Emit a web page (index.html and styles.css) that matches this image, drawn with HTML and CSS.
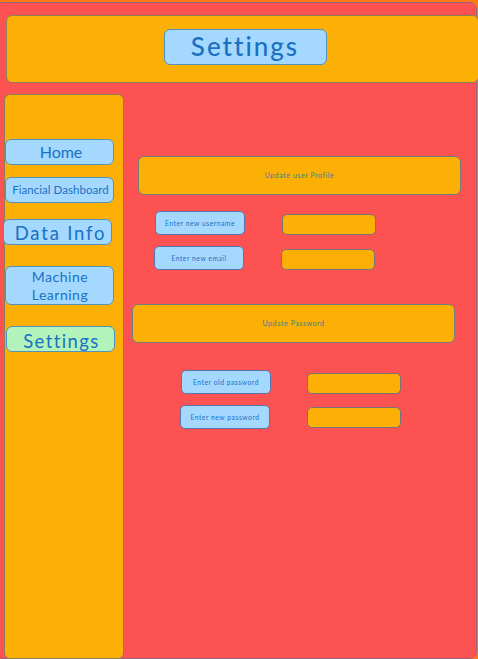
FILE: index.html
```html
<!DOCTYPE html>
<html lang="en">
<head>
<meta charset="utf-8">
<title>Settings</title>
<link rel="stylesheet" href="styles.css">
</head>
<body>
<div class="board">
  <header class="header"><h1 class="title"><span>Settings</span></h1></header>
  <div class="content">
    <nav class="sidebar">
      <a class="nav home"><span>Home</span></a>
      <a class="nav dashboard"><span>Fiancial Dashboard</span></a>
      <a class="nav data"><span>Data Info</span></a>
      <a class="nav learning"><span>Machine<br>Learning</span></a>
      <a class="nav active"><span>Settings</span></a>
    </nav>
    <main class="main">
      <section class="profile">
        <h2 class="panel"><span>Update user Profile</span></h2>
        <div class="row"><label class="label">Enter new username</label><div class="field"></div></div>
        <div class="row email"><label class="label">Enter new email</label><div class="field"></div></div>
      </section>
      <section class="password">
        <h2 class="panel"><span>Update Password</span></h2>
        <div class="row old"><label class="label">Enter old password</label><div class="field"></div></div>
        <div class="row new"><label class="label">Enter new password</label><div class="field"></div></div>
      </section>
    </main>
  </div>
</div>
</body>
</html>
```
FILE: styles.css
```css
* { box-sizing: border-box; }
body {
  margin: 0;
  width: 478px;
  height: 659px;
  overflow: hidden;
  background: #ff7a12;
  font-family: Excalifont, Lato, sans-serif;
  color: #1971c2;
}
h1, h2 { margin: 0; font-weight: 400; }
.board {
  width: 481px;
  height: 657px;
  margin: 2px 0 0 -4px;
  padding: 13px 0 0 9px;
  border: 1.5px solid #9b6282;
  border-radius: 7px;
  background: #fc5252;
}
.header {
  display: flex;
  justify-content: center;
  width: 473px;
  height: 68px;
  padding: 13px 0 0 5px;
  margin-top: -1px;
  border: 1px solid #8d7f56;
  border-radius: 6px;
  background: #fcb006;
}
.title {
  display: flex;
  align-items: center;
  justify-content: center;
  width: 163px;
  height: 36px;
  padding-bottom: 2px;
  border: 1px solid #5293bd;
  border-radius: 6px;
  background: #a5d8ff;
  font-size: 26px;
  font-weight: 500;
  line-height: 30px;
  letter-spacing: 2px;
}
.content { display: flex; margin: 11px 0 0 -2px; }
.sidebar {
  flex: none;
  width: 120px;
  height: 565px;
  padding-top: 44px;
  border: 1px solid #8d7f56;
  border-radius: 6px;
  background: #fcb006;
}
.nav {
  display: flex;
  align-items: center;
  justify-content: center;
  width: 109px;
  height: 26px;
  border: 1px solid #5293bd;
  border-radius: 6px;
  background: #a5d8ff;
  text-align: center;
  white-space: nowrap;
}
.home { padding: 0 0 2px 3px; font-size: 16px; }
.dashboard { margin-top: 12px; padding: 0 0 2px 2px; font-size: 11.5px; letter-spacing: .05px; }
.data { margin: 16px 0 0 -2px; padding: 2px 0 0 6px; font-size: 18.5px; letter-spacing: 1.8px; }
.learning { height: 39px; margin-top: 21px; padding-left: 1px; font-size: 14px; line-height: 18px; letter-spacing: .5px; }
.active { margin: 21px 0 0 1px; padding: 3px 0 0 2px; background: #b2f2bb; font-size: 18.5px; letter-spacing: 1.4px; }
.main { padding: 62px 0 0 14px; }
.panel {
  display: flex;
  align-items: center;
  justify-content: center;
  width: 323px;
  height: 39px;
  padding-bottom: 2px;
  border: 1px solid #71807c;
  border-radius: 6px;
  background: #fcb006;
  font-size: 7px;
}
.panel span { color: #3f7c99; letter-spacing: .55px; }
.row { display: flex; align-items: flex-end; gap: 37px; margin: 16px 0 0 17px; }
.label {
  display: flex;
  align-items: center;
  justify-content: center;
  width: 90px;
  height: 24px;
  padding-bottom: 1px;
  border: 1px solid #5875b0;
  border-radius: 5px;
  background: #a5d8ff;
  font-size: 6.7px;
  letter-spacing: .55px;
  white-space: nowrap;
}
.field {
  width: 94px;
  height: 21px;
  border: 1px solid #767477;
  border-radius: 5px;
  background: #fcb006;
}
.email { margin: 11px 0 0 16px; }
.password { margin: 34px 0 0 -6px; }
.old { margin: 27px 0 0 49px; gap: 36px; }
.new { margin: 11px 0 0 48px; }
.new .field { margin-bottom: 1px; }
```
